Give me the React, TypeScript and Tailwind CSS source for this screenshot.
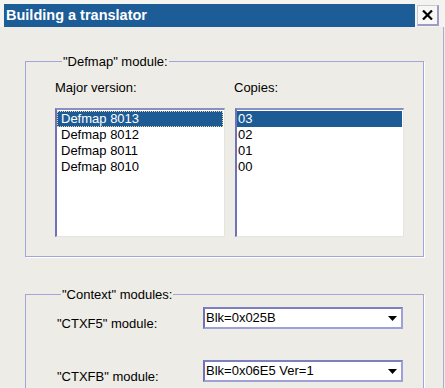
import React from "react";

const versions = ["Defmap 8013", "Defmap 8012", "Defmap 8011", "Defmap 8010"];
const copies = ["03", "02", "01", "00"];

const ListBox: React.FC<{ items: string[]; focused?: boolean; pad: string }> = ({ items, focused, pad }) => {
    return (
        <div className="h-[129px] bg-white border-l-2 border-t-2 border-r border-b border-l-[#6f72b4] border-t-[#8a8dc6] border-r-[#e4e4e0] border-b-[#e4e4e0] pt-px pr-px">
            {items.map((item, index) => (
                <div
                    key={index}
                    className={
                        index === 0
                            ? `h-[16px] leading-[16px] bg-[#1d5b95] text-white ${pad} ${focused ? "outline-1 outline-dotted outline-[#e8d8a0] -outline-offset-1" : ""}`
                            : `h-[16px] leading-[16px] text-black ${pad}`
                    }
                >
                    {item}
                </div>
            ))}
        </div>
    );
};

const Combo: React.FC<{ value: string }> = ({ value }) => {
    return (
        <div className="w-[200px] h-[22px] flex bg-white border-l-2 border-t-2 border-r-2 border-b-2 border-l-[#6f72b4] border-t-[#7d80c0] border-r-[#9ea0d8] border-b-[#9ea0d8]">
            <div className="flex-1 leading-[17px] pl-px text-black">{value}</div>
            <div className="w-[18px] flex items-center justify-center">
                <svg width="9" height="5" viewBox="0 0 9 5">
                    <path d="M0 0h9L4.5 5z" fill="#000" />
                </svg>
            </div>
        </div>
    );
};

export default function App() {
    return (
        <div className="w-[445px] h-[388px] overflow-hidden bg-[#edece6] text-[13px] text-black" style={{ fontFamily: '"Liberation Sans", Arial, sans-serif' }}>
            {/* Title bar */}
            <div className="flex h-[27px] pt-[4px] pl-[4px] bg-[#f3f3f0]">
                <div className="w-[411px] h-[23px] bg-[#1c5c97] text-white font-bold text-[14.5px] leading-[23px] pl-[2px]">
                    Building a translator
                </div>
                <div className="ml-[2px] mt-px w-[22px] h-[21px] flex items-center justify-center bg-[#f7f7f4] border border-[#c8c8d0] border-r-2 border-b-2 border-r-[#9c9cc8] border-b-[#9c9cc8]">
                    <svg width="11" height="10" viewBox="0 0 11 10">
                        <path d="M1 0.5L10 9.5M10 0.5L1 9.5" stroke="#000" strokeWidth="2.2" />
                    </svg>
                </div>
            </div>

            {/* Body */}
            <div className="flex">
                <div className="flex-1 pl-[25px] pr-[19px]">
                    {/* Defmap group */}
                    <fieldset className="mt-[27px] border border-[#a3a5d8] shadow-[1px_1px_0_#ffffff] pl-[29px] pr-[19px] pb-[19px]">
                        <legend className="ml-[7px] px-px leading-[15px]">"Defmap" module:</legend>
                        <div className="grid grid-cols-[170px_169px] gap-x-[10px] mt-[11px]">
                            <div className="leading-[15px]">Major version:</div>
                            <div className="leading-[15px] -ml-[1px]">Copies:</div>
                            <div className="mt-[13px]">
                                <ListBox items={versions} focused pad="pl-[4px]" />
                            </div>
                            <div className="mt-[13px]">
                                <ListBox items={copies} pad="pl-[1px]" />
                            </div>
                        </div>
                    </fieldset>

                    {/* Context group */}
                    <fieldset className="mt-[30px] border border-[#a3a5d8] shadow-[1px_1px_0_#ffffff] pl-[29px] pb-[20px]">
                        <legend className="ml-[6px] px-px leading-[15px]">"Context" modules:</legend>
                        <div className="flex flex-col gap-[29px] mt-[5px]">
                            <div className="flex items-start">
                                <div className="w-[148px] mt-[9px] leading-[15px] pl-[2px]">"CTXF5" module:</div>
                                <Combo value="Blk=0x025B" />
                            </div>
                            <div className="flex items-start">
                                <div className="w-[148px] mt-[9px] leading-[15px] pl-[2px]">"CTXFB" module:</div>
                                <Combo value="Blk=0x06E5 Ver=1" />
                            </div>
                        </div>
                    </fieldset>
                </div>
                <div className="w-px h-[361px] bg-[#a9abd9]" />
                <div className="w-[1px]" />
            </div>
        </div>
    );
}
